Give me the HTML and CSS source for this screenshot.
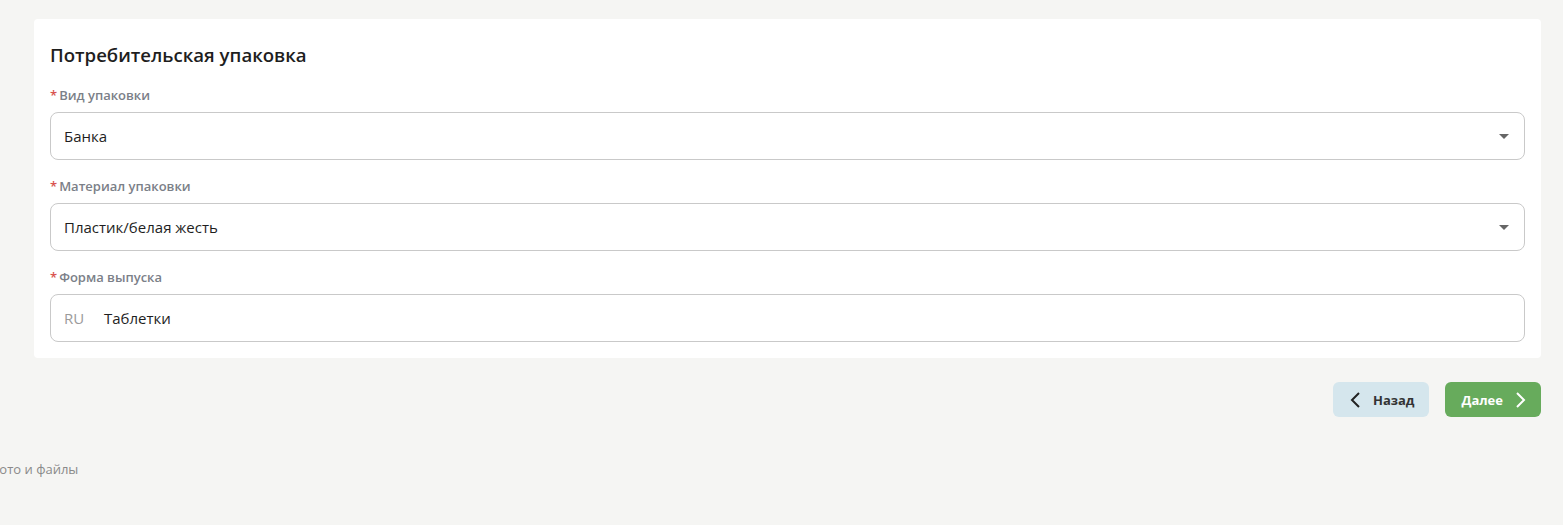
FILE: index.html
```html
<!DOCTYPE html>
<html lang="ru">
<head>
    <meta charset="UTF-8">
    <meta name="viewport" content="width=device-width, initial-scale=1.0">
    <title>Потребительская упаковка</title>
    <link rel="stylesheet" href="styles.css">
</head>
<body>
    <div class="page">
        <div class="card">
            <h2 class="card-title">Потребительская упаковка</h2>

            <div class="field">
                <label class="field-label"><span class="req">*</span>Вид упаковки</label>
                <div class="select">
                    <span>Банка</span>
                    <span class="caret"></span>
                </div>
            </div>

            <div class="field">
                <label class="field-label"><span class="req">*</span>Материал упаковки</label>
                <div class="select">
                    <span>Пластик/белая жесть</span>
                    <span class="caret"></span>
                </div>
            </div>

            <div class="field">
                <label class="field-label"><span class="req">*</span>Форма выпуска</label>
                <div class="input">
                    <span class="lang">RU</span>
                    <span>Таблетки</span>
                </div>
            </div>
        </div>

        <div class="actions">
            <button class="btn btn-back">
                <svg width="14" height="18" viewBox="0 0 14 18"><path d="M10 2 L3 9 L10 16" fill="none" stroke="#222" stroke-width="2"/></svg>
                Назад
            </button>
            <button class="btn btn-next">
                Далее
                <svg width="14" height="18" viewBox="0 0 14 18"><path d="M4 2 L11 9 L4 16" fill="none" stroke="#fff" stroke-width="2"/></svg>
            </button>
        </div>

        <div class="step-label">Фото и файлы</div>
    </div>
</body>
</html>
```

FILE: styles.css
```css
body {
    margin: 0;
    padding: 0;
    font-family: "Open Sans", Arial, sans-serif;
    background-color: #f5f5f3;
    overflow: hidden;
}
.page {
    padding: 19px 22px 0 34px;
}

.card {
    background-color: #fff;
    border-radius: 4px;
    padding: 22px 16px 16px 16px;
}
.card-title {
    margin: 0 0 17px 0;
    font-size: 18.6px;
    font-weight: 600;
    color: #1e1e1e;
    line-height: 28px;
}

.field {
    margin-top: 17px;
}
.field:first-of-type {
    margin-top: 0;
}
.field-label {
    display: block;
    font-size: 13px;
    font-weight: 600;
    color: #7b8088;
    line-height: 18px;
    margin-bottom: 8px;
}
.req {
    color: #d9534f;
    margin-right: 2px;
}

.select,
.input {
    display: flex;
    align-items: center;
    height: 46px;
    border: 1px solid #c9c9c9;
    border-radius: 8px;
    padding: 0 14px 0 13px;
    font-size: 15px;
    color: #1e1e1e;
}
.select {
    justify-content: space-between;
}
.caret {
    width: 0;
    height: 0;
    border-left: 5px solid transparent;
    border-right: 5px solid transparent;
    border-top: 5px solid #666;
    margin-right: 1px;
}
.lang {
    color: #9a9a9a;
    width: 40px;
}

.actions {
    display: flex;
    justify-content: flex-end;
    gap: 16px;
    margin-top: 24px;
}
.btn {
    display: flex;
    align-items: center;
    gap: 10px;
    height: 35px;
    border: none;
    border-radius: 6px;
    font-family: "Open Sans", Arial, sans-serif;
    font-size: 13px;
    font-weight: 700;
    cursor: pointer;
}
.btn-back {
    background-color: #d5e6ed;
    color: #333;
    padding: 0 15px 0 16px;
}
.btn-next {
    background-color: #67ab5c;
    color: #fff;
    padding: 0 14px 0 16px;
}

.step-label {
    margin: 43px 0 0 -45px;
    font-size: 13px;
    color: #8a8a8a;
}
```
